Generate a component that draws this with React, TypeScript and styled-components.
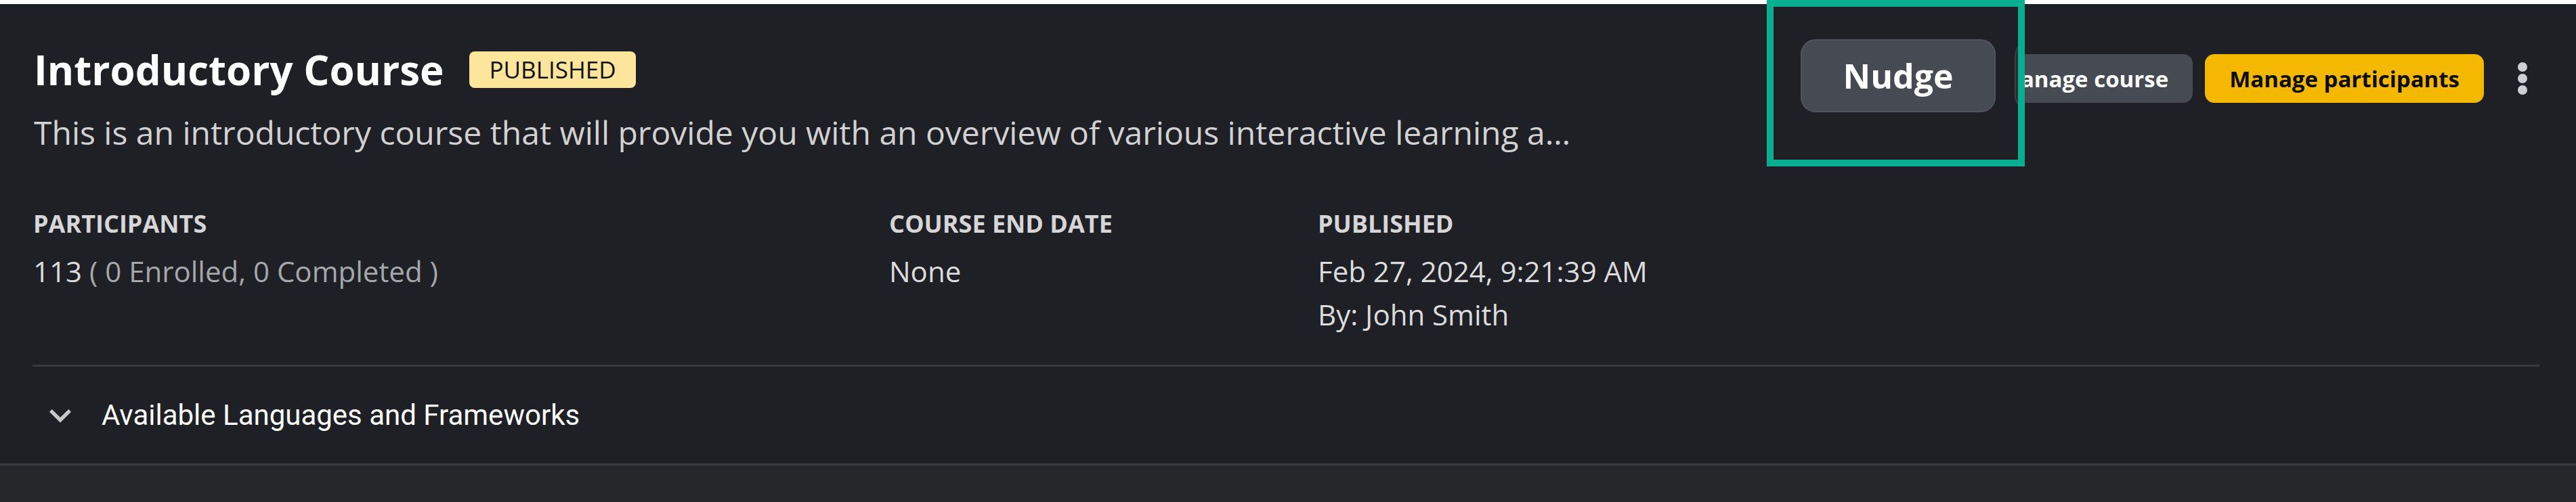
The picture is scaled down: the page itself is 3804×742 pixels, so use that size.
import * as React from 'react';
import styled, { createGlobalStyle } from 'styled-components';

const GlobalStyle = createGlobalStyle`
  html, body {
    margin: 0;
    padding: 0;
    background: #ffffff;
  }
  body {
    font-family: 'Open Sans', 'Noto Sans', sans-serif;
  }
  * {
    box-sizing: border-box;
  }
`;

interface StatProps {
  label: string;
  children: React.ReactNode;
}

function Stat({ label, children }: StatProps) {
  return (
    <StyledStat>
      <StatLabel>{label}</StatLabel>
      {children}
    </StyledStat>
  );
}

export default function App() {
  return (
    <>
      <GlobalStyle />
      <Page>
        <Card>
          <Header>
            <Main>
              <TitleRow>
                <Title>Introductory Course</Title>
                <StatusBadge>PUBLISHED</StatusBadge>
              </TitleRow>
              <Description>
                This is an introductory course that will provide you with an
                overview of various interactive learning activities and tools
                available on the platform.
              </Description>
            </Main>
            <Actions>
              <ActionButton $variant="secondary">Manage course</ActionButton>
              <ActionButton $variant="primary">Manage participants</ActionButton>
              <KebabButton aria-label="More actions">
                <svg width="50" height="56" viewBox="0 0 50 56">
                  <circle cx="25" cy="11" r="7" />
                  <circle cx="25" cy="28" r="7" />
                  <circle cx="25" cy="45" r="7" />
                </svg>
              </KebabButton>
            </Actions>
          </Header>

          <Stats>
            <Stat label="PARTICIPANTS">
              <StatValue>
                113 <Muted>( 0 Enrolled, 0 Completed )</Muted>
              </StatValue>
            </Stat>
            <Stat label="COURSE END DATE">
              <StatValue>None</StatValue>
            </Stat>
            <Stat label="PUBLISHED">
              <StatValue>Feb 27, 2024, 9:21:39 AM</StatValue>
              <StatValue>By: John Smith</StatValue>
            </Stat>
          </Stats>

          <Divider />

          <AccordionSummary>
            <ChevronIcon viewBox="0 0 24 24">
              <path d="M16.59 8.59 12 13.17 7.41 8.59 6 10l6 6 6-6z" />
            </ChevronIcon>
            <AccordionTitle>Available Languages and Frameworks</AccordionTitle>
          </AccordionSummary>

          {/* onboarding tour spotlight laid over the action buttons */}
          <Spotlight>
            <NudgeButton>Nudge</NudgeButton>
            <GhostPill />
          </Spotlight>
        </Card>
      </Page>
    </>
  );
}

const Page = styled.div`
  margin-top: 6px;
  min-height: 736px;
  background: #25272b;
`;

const Card = styled.section`
  position: relative;
  background: #1f2025;
  padding: 57px 54px 0 48px;
  border-bottom: 3px solid #3a3d42;
`;

const Header = styled.div`
  display: flex;
  justify-content: space-between;
  align-items: flex-start;
`;

const Main = styled.div`
  display: flex;
  flex-direction: column;
  min-width: 0;
`;

const TitleRow = styled.div`
  display: flex;
  align-items: center;
  gap: 38px;
`;

const Title = styled.h1`
  margin: 0;
  font-size: 60px;
  line-height: 80px;
  font-weight: 700;
  color: #ffffff;
  padding-left: 2px;
`;

const StatusBadge = styled.span`
  display: inline-block;
  padding: 3px 29px;
  border-radius: 8px;
  background: #fde59c;
  color: #111111;
  font-size: 35px;
  line-height: 48px;
  font-weight: 400;
`;

const Description = styled.p`
  margin: 16px 0 0;
  width: 2280px;
  font-size: 48px;
  line-height: 73px;
  color: #d2d2d4;
  white-space: nowrap;
  overflow: hidden;
  text-overflow: ellipsis;
  padding-left: 2px;
`;

const Actions = styled.div`
  display: flex;
  align-items: center;
  gap: 18px;
  margin-top: 17px;
`;

const ActionButton = styled.button<{ $variant: 'primary' | 'secondary' }>`
  height: 72px;
  padding: 0 36px;
  border: none;
  border-radius: 14px;
  font-family: inherit;
  font-size: 33px;
  font-weight: 700;
  white-space: nowrap;
  cursor: pointer;
  background: ${p => (p.$variant === 'primary' ? '#f5b800' : '#464a53')};
  color: ${p => (p.$variant === 'primary' ? '#0d0d0d' : '#ffffff')};
`;

const KebabButton = styled.button`
  display: flex;
  align-items: center;
  justify-content: center;
  width: 50px;
  height: 72px;
  margin-left: 14px;
  padding: 0;
  border: none;
  background: transparent;
  fill: #cfcfd1;
  cursor: pointer;
`;

const Stats = styled.div`
  display: grid;
  grid-template-columns: 1264px 633px 1fr;
  margin-top: 73px;
`;

const StyledStat = styled.div`
  display: flex;
  flex-direction: column;
  padding-left: 1px;
`;

const StatLabel = styled.div`
  font-size: 36px;
  line-height: 51px;
  font-weight: 700;
  color: #d6d6d8;
  margin-bottom: 13px;
`;

const StatValue = styled.div`
  font-size: 42px;
  line-height: 64px;
  color: #dcdcde;
`;

const Muted = styled.span`
  color: #a6a7aa;
`;

const Divider = styled.hr`
  margin: 42px 0 0;
  border: none;
  height: 3px;
  background: #393b40;
`;

const AccordionSummary = styled.div`
  display: flex;
  align-items: center;
  gap: 29px;
  height: 143px;
  padding-left: 9px;
`;

const ChevronIcon = styled.svg`
  width: 64px;
  height: 64px;
  fill: #c8c8ca;
  flex-shrink: 0;
`;

const AccordionTitle = styled.span`
  font-family: Roboto, 'Open Sans', sans-serif;
  font-size: 42px;
  color: #ffffff;
`;

const Spotlight = styled.div`
  position: absolute;
  left: 2609px;
  top: -6px;
  width: 381px;
  height: 246px;
  border: 10px solid #08ae90;
  background: #1f2025;
  overflow: hidden;
  display: flex;
  align-items: center;
  gap: 28px;
  padding: 0 0 22px 40px;
`;

const NudgeButton = styled.button`
  flex-shrink: 0;
  width: 288px;
  height: 108px;
  border: 2px solid #50545d;
  border-radius: 22px;
  background: #464a53;
  color: #ffffff;
  font-family: inherit;
  font-size: 50px;
  font-weight: 700;
  cursor: pointer;
`;

const GhostPill = styled.div`
  flex-shrink: 0;
  width: 200px;
  height: 100px;
  border-radius: 20px;
  border: 2px solid #3c3f46;
  background: #2a2c32;
`;
